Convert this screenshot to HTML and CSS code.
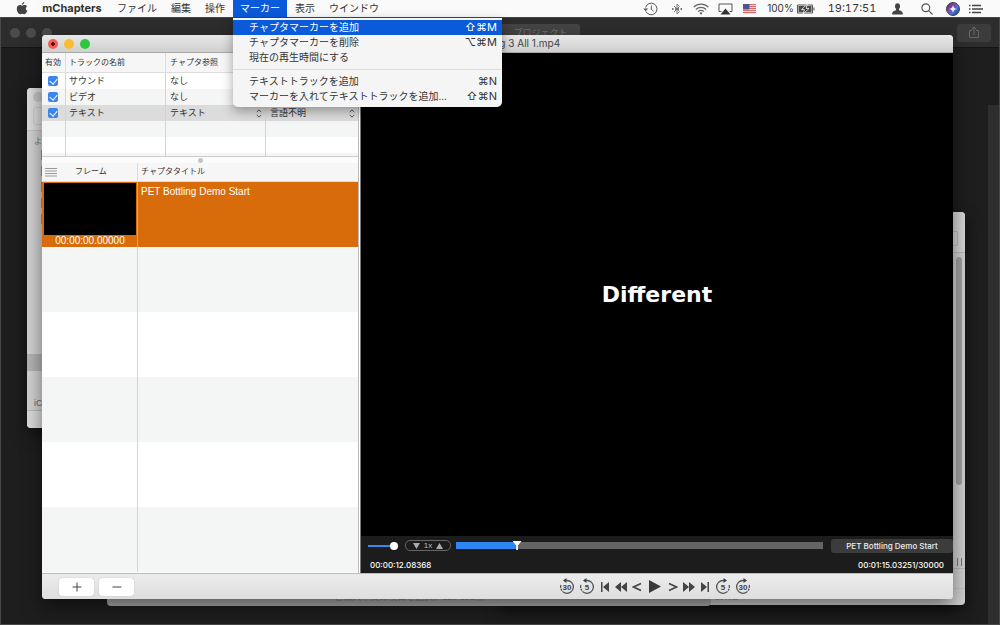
FILE: index.html
```html
<!DOCTYPE html>
<html lang="ja">
<head>
<meta charset="utf-8">
<title>mChapters</title>
<link rel="stylesheet" href="styles.css">
</head>
<body>
<div class="desktop">
  <header class="menubar">
    <nav class="menus" aria-label="メニュー">
      <button class="menu menu-apple" aria-label="Apple">
        <svg width="12" height="13" viewBox="0 0 12 13"><path fill="#444" d="M8.3 0c.1 1.300-1 2.700-2.300 2.700C5.800 1.500 7 .2 8.300 0zM10.900 4.400C9.300 5.400 9.500 7.900 11.300 8.700 10.700 10.500 9.500 12.300 8.300 12.300c-.8 0-1.100-.5-2-.5s-1.300.5-2 .5C2.500 12.300.8 9.300.8 6.800c0-2.400 1.500-3.700 3-3.700 1 0 1.700.6 2.400.6.600 0 1.400-.7 2.600-.7.9 0 1.700.5 2.100 1.400z"/></svg>
      </button>
      <button class="menu menu-app">mChapters</button>
      <button class="menu">ファイル</button>
      <button class="menu">編集</button>
      <button class="menu">操作</button>
      <div class="menu-wrap">
        <button class="menu menu-open" aria-expanded="true">マーカー</button>
        <div class="dropdown" role="menu">
          <button class="item item-active" role="menuitem"><span>チャプタマーカーを追加</span><kbd>⇧⌘M</kbd></button>
          <button class="item" role="menuitem"><span>チャプタマーカーを削除</span><kbd>⌥⌘M</kbd></button>
          <button class="item" role="menuitem"><span>現在の再生時間にする</span></button>
          <hr class="separator">
          <button class="item" role="menuitem"><span>テキストトラックを追加</span><kbd>⌘N</kbd></button>
          <button class="item" role="menuitem"><span>マーカーを入れてテキストトラックを追加...</span><kbd>⇧⌘N</kbd></button>
        </div>
      </div>
      <button class="menu">表示</button>
      <button class="menu">ウインドウ</button>
    </nav>
    <div class="status">
      <button class="stat stat-wide" aria-label="Time Machine"><svg width="16" height="14" viewBox="0 0 16 14" fill="none" stroke="#555"><path d="M3 9.500A5.800 5.800 0 1 0 2.600 5.500"/><path d="M8.300 3.500V7.300l2.300 1.900"/><path d="M.3 6.500h4.800L2.700 9.300z" fill="#555" stroke="none"/></svg></button>
      <button class="stat" aria-label="Bluetooth"><svg width="10" height="14" viewBox="0 0 10 14" fill="none" stroke="#777"><path d="M2 4l5.500 5.500L5 12V2l2.500 2.500L2 10"/><path d="M0 7h1.500M3 7h1M6 7h1M8.500 7H10" stroke-width="2"/></svg></button>
      <button class="stat" aria-label="Wi-Fi"><svg width="16" height="12" viewBox="0 0 16 12" fill="none" stroke="#666" stroke-width="1.200"><path d="M.7 4.200a10.300 10.300 0 0 1 14.600 0M2.900 6.500a7.200 7.200 0 0 1 10.200 0M5.100 8.600a4.100 4.100 0 0 1 5.800 0"/><path d="M6.500 10a2.100 2.100 0 0 1 3 0L8 11.700z" fill="#555" stroke="none"/></svg></button>
      <button class="stat" aria-label="AirPlay"><svg width="15" height="12" viewBox="0 0 15 12"><path d="M3.500 8.500H1V1h13v7.500h-2.500" fill="none" stroke="#555"/><path d="M7.500 5.500l5 6h-10z" fill="#333"/></svg></button>
      <button class="stat" aria-label="U.S."><svg width="13" height="10" viewBox="0 0 13 10"><path fill="#eedddd" d="M0 0h13v10H0z"/><path stroke="#d46a6a" d="M0 .5h13M0 2.500h13M0 4.500h13M0 6.500h13M0 8.500h13"/><path fill="#4c5590" d="M0 0h6.500v5.500H0z"/></svg></button>
      <button class="stat stat-battery"><span>100%</span><svg width="18" height="10" viewBox="0 0 18 10"><path d="M.5 1h15v8H.5zM17 3.500v3" fill="none" stroke="#555"/><path fill="#4a4a4a" d="M1.500 2h13v6h-13z"/><path d="M10.500 0L4.500 5.600h3L6 10l6-5.600H9z" fill="#333" stroke="#fafafa" stroke-width=".8"/></svg></button>
      <time class="stat stat-clock">19:17:51</time>
      <button class="stat stat-wide" aria-label="ユーザ"><svg width="11" height="12" viewBox="0 0 11 12" fill="#444"><ellipse cx="5.500" cy="3.300" rx="2.500" ry="3"/><path d="M4 5.500h3v1.700c2.500.5 3.900 1.500 3.900 4.300H.1C.1 8.700 1.500 7.700 4 7.200z"/></svg></button>
      <button class="stat stat-wide" aria-label="検索"><svg width="12" height="12" viewBox="0 0 12 12" fill="none" stroke="#555" stroke-width="1.200"><circle cx="4.800" cy="4.800" r="3.900"/><path d="M7.700 7.700l3.800 3.800"/></svg></button>
      <button class="stat stat-small" aria-label="Siri"><svg width="14" height="14" viewBox="0 0 14 14"><defs><linearGradient id="siri" x1="0" y1="0" x2="1" y2="1"><stop offset="0" stop-color="#3c3350"/><stop offset=".35" stop-color="#903c9a"/><stop offset=".6" stop-color="#4676dc"/><stop offset="1" stop-color="#24304e"/></linearGradient></defs><circle cx="7" cy="7" r="6.500" fill="url(#siri)" stroke="#445"/><path d="M7 3c.4 2.500 1.200 3.200 4 4C8.200 7.800 7.400 8.500 7 11 6.600 8.500 5.800 7.800 3 7 5.800 6.200 6.600 5.500 7 3z" fill="#e6f2ff"/></svg></button>
      <button class="stat stat-small" aria-label="通知センター"><svg width="14" height="10" viewBox="0 0 14 10"><path d="M0 1.500h1.500M3 1.500h9M0 5h1.500M3 5h11M0 8.500h1.500M3 8.500h9" stroke="#444" stroke-width="1.300"/></svg></button>
    </div>
  </header>

  <main class="stage">
    <section class="editor">
      <div class="editor-bar">
        <div class="dots"><i></i><i></i><i></i></div>
        <span class="editor-tab">プロジェクト</span>
        <button class="share" aria-label="共有"><svg width="12" height="13" viewBox="0 0 12 13" fill="none" stroke="#666"><path d="M4 4.500H1.500v7h9v-7H8M6 9V1.200M3.800 3.300L6 1l2.200 2.300"/></svg></button>
      </div>
      <div class="editor-body"><div class="editor-gutter"></div></div>
    </section>

    <section class="finder">
      <div class="finder-top"><i class="finder-dot"></i><i class="finder-back"></i></div>
      <p class="finder-label">よく使う項目</p>
      <div class="finder-rows"><i></i><i></i><i></i><i></i><i></i></div>
      <div class="finder-selected"></div>
      <p class="finder-cloud">iCloud</p>
      <div class="finder-foot"></div>
    </section>

    <section class="browser">
      <div class="browser-top"><i></i></div>
      <div class="browser-mid"><i class="scroll"></i><i class="grip"></i></div>
      <div class="browser-line"></div>
      <p class="browser-foot">説明書</p>
    </section>

    <section class="sheet"><p>ご購入本文の項目を選択、120 192点</p></section>

    <section class="window">
      <header class="titlebar">
        <div class="lights">
          <button class="light light-close" aria-label="閉じる"></button>
          <button class="light light-min" aria-label="しまう"></button>
          <button class="light light-zoom" aria-label="拡大"></button>
        </div>
        <h1 class="title">01 PET Bottling 3 All 1.mp4</h1>
      </header>

      <div class="content">
        <div class="lists">
          <table class="tracks">
            <colgroup><col class="col-on"><col class="col-name"><col class="col-name"><col></colgroup>
            <thead><tr><th>有効</th><th>トラックの名前</th><th>チャプタ参照</th><th aria-label="言語"></th></tr></thead>
            <tbody>
              <tr><td><input type="checkbox" class="tick" checked aria-label="サウンド"></td><td>サウンド</td><td>なし</td><td></td></tr>
              <tr><td><input type="checkbox" class="tick" checked aria-label="ビデオ"></td><td>ビデオ</td><td>なし</td><td></td></tr>
              <tr class="chosen"><td><input type="checkbox" class="tick" checked aria-label="テキスト"></td><td>テキスト</td>
                <td><div class="pick"><select aria-label="チャプタ参照"><option>テキスト</option></select><svg width="6" height="9" viewBox="0 0 6 9" fill="none" stroke="#555"><path d="M.8 3L3 .9 5.200 3M.8 6L3 8.100 5.200 6"/></svg></div></td>
                <td><div class="pick"><select aria-label="言語"><option>言語不明</option></select><svg width="6" height="9" viewBox="0 0 6 9" fill="none" stroke="#555"><path d="M.8 3L3 .9 5.200 3M.8 6L3 8.100 5.200 6"/></svg></div></td></tr>
              <tr><td></td><td></td><td></td><td></td></tr>
              <tr><td></td><td></td><td></td><td></td></tr>
              <tr class="stub"><td></td><td></td><td></td><td></td></tr>
            </tbody>
          </table>
          <div class="splitter"><i></i></div>
          <div class="chapters-box">
            <table class="chapters">
              <colgroup><col class="col-frame"><col></colgroup>
              <thead><tr><th><div class="frame-head"><svg width="12" height="9" viewBox="0 0 12 9"><path d="M0 .5h12M0 3h12M0 5.500h12M0 8h12" stroke="#999"/></svg><span>フレーム</span></div></th><th>チャプタタイトル</th></tr></thead>
              <tbody>
                <tr class="current"><td><div class="thumb"></div><div class="stamp">00:00:00.00000</div></td><td>PET Bottling Demo Start</td></tr>
                <tr><td></td><td></td></tr>
                <tr><td></td><td></td></tr>
                <tr><td></td><td></td></tr>
                <tr><td></td><td></td></tr>
                <tr><td></td><td></td></tr>
              </tbody>
            </table>
          </div>
        </div>

        <div class="player">
          <div class="video"><p>Different</p></div>
          <div class="controls">
            <div class="control-row">
              <input type="range" class="volume" min="0" max="100" value="100" aria-label="音量">
              <div class="rate"><button aria-label="遅く"><svg width="7" height="6" viewBox="0 0 7 6"><path fill="#aaa" d="M0 0h7L3.500 6z"/></svg></button><span>1x</span><button aria-label="速く"><svg width="7" height="6" viewBox="0 0 7 6"><path fill="#aaa" d="M0 6h7L3.500 0z"/></svg></button></div>
              <input type="range" class="seek" min="0" max="1000" value="158" aria-label="再生位置">
              <button class="chapter-now">PET Bottling Demo Start</button>
            </div>
            <div class="time-row"><time>00:00:12.08368</time><time>00:01:15.03251/30000</time></div>
          </div>
        </div>
      </div>

      <footer class="footer">
        <div class="edit">
          <button aria-label="追加"><svg width="10" height="10" viewBox="0 0 10 10" stroke="#444"><path d="M.5 5h9M5 .5v9"/></svg></button>
          <button aria-label="削除"><svg width="10" height="10" viewBox="0 0 10 10" stroke="#444"><path d="M.5 5h9"/></svg></button>
        </div>
        <div class="transport">
          <button class="big" aria-label="30秒戻る"><svg width="16" height="17" viewBox="0 0 16 17"><path d="M5 2.500h3A6.400 6.400 0 1 1 1.900 7" fill="none" stroke="#555" stroke-width="1.300" stroke-dasharray="28 1 2 1 30"/><path d="M4 2.500L7.500 0v5z" fill="#444"/><text x="8" y="12" class="num">30</text></svg></button>
          <button class="big" aria-label="5秒戻る"><svg width="16" height="17" viewBox="0 0 16 17"><path d="M5 2.500h3A6.400 6.400 0 1 1 1.900 7" fill="none" stroke="#555" stroke-width="1.300" stroke-dasharray="28 1 2 1 30"/><path d="M4 2.500L7.500 0v5z" fill="#444"/><text x="8" y="12" class="num">5</text></svg></button>
          <button aria-label="先頭へ"><svg width="8" height="10" viewBox="0 0 8 10" fill="#444"><path d="M0 0h1.500v10H0zM8 0v10L2 5z"/></svg></button>
          <button aria-label="巻き戻し"><svg width="12" height="10" viewBox="0 0 12 10" fill="#444"><path d="M6 0v10L0 5zM12 0v10L6 5z"/></svg></button>
          <button aria-label="前のコマ"><svg width="10" height="10" viewBox="0 0 10 10" fill="none" stroke="#444" stroke-width="1.600"><path d="M9 1.500L1.500 5 9 8.500"/></svg></button>
          <button class="big" aria-label="再生"><svg width="12" height="13" viewBox="0 0 12 13" fill="#3a3a3a"><path d="M0 0l12 6.500L0 13z"/></svg></button>
          <button aria-label="次のコマ"><svg width="10" height="10" viewBox="0 0 10 10" fill="none" stroke="#444" stroke-width="1.600"><path d="M1 1.500L8.500 5 1 8.500"/></svg></button>
          <button aria-label="早送り"><svg width="12" height="10" viewBox="0 0 12 10" fill="#444"><path d="M0 0v10l6-5zM6 0v10l6-5z"/></svg></button>
          <button aria-label="末尾へ"><svg width="8" height="10" viewBox="0 0 8 10" fill="#444"><path d="M6.500 0H8v10H6.500zM0 0v10l6-5z"/></svg></button>
          <button class="big" aria-label="5秒進む"><svg width="16" height="17" viewBox="0 0 16 17"><path d="M11 2.500H8A6.400 6.400 0 1 0 14.100 7" fill="none" stroke="#555" stroke-width="1.300" stroke-dasharray="28 1 2 1 30"/><path d="M12 2.500L8.500 0v5z" fill="#444"/><text x="8" y="12" class="num">5</text></svg></button>
          <button class="big" aria-label="30秒進む"><svg width="16" height="17" viewBox="0 0 16 17"><path d="M11 2.500H8A6.400 6.400 0 1 0 14.100 7" fill="none" stroke="#555" stroke-width="1.300" stroke-dasharray="28 1 2 1 30"/><path d="M12 2.500L8.500 0v5z" fill="#444"/><text x="8" y="12" class="num">30</text></svg></button>
        </div>
      </footer>
    </section>
  </main>
</div>
</body>
</html>
```
FILE: styles.css
```css
* { box-sizing: border-box; }
body {
  margin: 0;
  background: #1e1e1e;
  color: #333;
  font: 10px/15px "Liberation Sans", "Noto Sans CJK JP", sans-serif;
}
button, select, input { font: inherit; color: inherit; margin: 0; }
button { border: 0; padding: 0; background: none; }
p, h1, hr { margin: 0; }
i { display: block; }
svg { display: block; flex: none; }

.desktop { display: flex; flex-direction: column; height: 100vh; overflow: hidden; }

/* Menu bar */
.menubar {
  display: flex;
  justify-content: space-between;
  height: 17px;
  padding: 0 13px 0 9px;
  background: #fafafa;
  position: relative;
  z-index: 10;
}
.menus, .status { display: flex; align-items: stretch; }
.menu { height: 17px; padding: 0 7px; white-space: nowrap; }
.menu-apple { width: 26px; }
.menu-app { width: 74px; margin-right: 1px; font: bold 11px/17px "Inter", sans-serif; }
.menu-wrap { position: relative; margin: 0 1px; }
.menu-open { background: #0a5ad9; color: #fff; }
.dropdown {
  position: absolute;
  top: 18px;
  left: 0;
  width: 269px;
  padding: 2px 0 3px;
  background: #f5f5f5;
  border-radius: 0 0 5px 5px;
  box-shadow: 0 4px 12px rgba(0, 0, 0, .35);
}
.item {
  display: flex;
  justify-content: space-between;
  width: 100%;
  height: 15px;
  padding: 0 5px 0 16px;
  line-height: 15px;
}
.item-active { background: #0a5ad9; color: #fff; }
.item kbd { font: 11px/15px "Inter", "DejaVu Sans", sans-serif; }
.separator { height: 9px; border: 0; background: linear-gradient(#ddd, #ddd) center / 100% 1px no-repeat; }
.stat {
  display: flex;
  align-items: center;
  justify-content: center;
  width: 24px;
  font: 10px/17px "Inter", sans-serif;
}
.stat-small { width: 23px; }
.stat-wide { width: 29px; }
.stat-battery { width: 60px; gap: 3px; }
.stat-clock { width: 62px; font-size: 11px; font-variant-numeric: tabular-nums; }

/* Background windows */
.stage { flex: 1; position: relative; }
.editor {
  position: absolute;
  inset: 0;
  display: flex;
  flex-direction: column;
  border: 1px solid #484848;
  border-top-color: #3a4654;
}
.editor-bar {
  display: flex;
  align-items: center;
  justify-content: space-between;
  height: 30px;
  padding: 0 8px 0 9px;
  background: #2d2d2d;
  border-bottom: 1px solid #151515;
}
.dots { display: flex; gap: 6px; }
.dots i { width: 10px; height: 10px; border-radius: 50%; background: #4b4b4b; }
.editor-tab {
  width: 150px;
  height: 18px;
  padding-right: 12px;
  background: #444;
  border-radius: 3px;
  color: #707070;
  font-size: 9px;
  text-align: right;
  line-height: 18px;
}
.share { display: grid; place-items: center; width: 34px; height: 18px; background: #3c3c3c; border-radius: 3px; }
.editor-body { flex: 1; display: flex; justify-content: flex-end; background: #1e1e1e; }
.editor-gutter { width: 11px; margin-top: 57px; background: #2e2e2e; }

.finder {
  position: absolute;
  left: 27px;
  top: 71px;
  width: 300px;
  height: 340px;
  background: #d4d4d4;
  border-radius: 4px;
  box-shadow: 0 6px 16px rgba(0, 0, 0, .5);
  overflow: hidden;
}
.finder-top { height: 43px; padding: 4px 0 0 6px; background: #dedede; border-bottom: 1px solid #c4c4c4; }
.finder-dot { width: 10px; height: 10px; border-radius: 50%; background: #c6c6c6; }
.finder-back { width: 60px; height: 18px; margin-top: 5px; border: 1px solid #ccc; border-radius: 3px; }
.finder-label { padding: 2px 0 0 7px; font-size: 8px; line-height: 17px; color: #777; }
.finder-rows { display: grid; gap: 6px; padding: 0 0 0 14px; }
.finder-rows i { width: 9px; height: 10px; background: #999; }
.finder-selected { height: 17px; margin-top: 130px; background: #b5b5b5; }
.finder-cloud { padding: 25px 0 0 7px; font-size: 9px; line-height: 14px; color: #666; }
.finder-foot { height: 18px; border-top: 1px solid #bbb; background: #dcdcdc; }

.browser {
  position: absolute;
  left: 500px;
  right: 35px;
  top: 195px;
  bottom: 20px;
  display: flex;
  flex-direction: column;
  background: #d2d2d2;
  border-radius: 4px;
  box-shadow: 0 6px 16px rgba(0, 0, 0, .5);
}
.browser-top { display: flex; justify-content: flex-end; height: 41px; padding: 19px 7px 6px; border-bottom: 1px solid #bbb; border-radius: 4px 4px 0 0; background: #d8d8d8; }
.browser-top i { width: 60px; border: 1px solid #bbb; }
.browser-mid { flex: 1; display: flex; flex-direction: column; justify-content: space-between; align-items: flex-end; padding: 4px 3px 2px; border-bottom: 1px solid #bbb; }
.scroll { width: 6px; height: 228px; border-radius: 3px; background: #a2a2a2; }
.grip { width: 5px; height: 8px; border: solid #777; border-width: 0 1px; }
.browser-line { height: 20px; border-bottom: 1px solid #c4c4c4; }
.browser-foot { padding-left: 215px; color: #888; font-size: 8px; line-height: 16px; }

.sheet {
  position: absolute;
  left: 107px;
  right: 289px;
  top: 400px;
  bottom: 19px;
  display: flex;
  align-items: flex-end;
  justify-content: center;
  background: #b0b0b0;
  border-radius: 4px;
}
.sheet p { color: #888; font-size: 9px; line-height: 17px; }

/* Main window */
.window {
  position: absolute;
  left: 42px;
  right: 47px;
  top: 18px;
  bottom: 26px;
  display: flex;
  flex-direction: column;
  background: #fff;
  border-radius: 4px;
  box-shadow: 0 8px 20px rgba(0, 0, 0, .5);
  overflow: hidden;
}
.titlebar {
  display: grid;
  grid-template-columns: 1fr auto 1fr;
  align-items: center;
  height: 18px;
  padding: 0 6px;
  background: linear-gradient(#e8e8e8, #cfcfcf);
  border-bottom: 1px solid #aaa;
}
.title { font: 10px/17px "Inter", sans-serif; color: #444; }
.lights { display: flex; gap: 6px; }
.light { width: 10px; height: 10px; border-radius: 50%; }
.light-close { background: radial-gradient(circle, #6b0a05 0 2px, #f25e55 2px); }
.light-min { background: #fbbd2e; }
.light-zoom { background: #2ac840; }
.content { flex: 1; display: grid; grid-template-columns: 317px 1fr; min-height: 0; }
.lists { display: flex; flex-direction: column; min-height: 0; border-right: 1px solid #bbb; }

table { width: 100%; border-collapse: separate; border-spacing: 0; table-layout: fixed; }
th { font-size: 8px; font-weight: normal; text-align: left; background: #f6f6f6; border-bottom: 1px solid #ddd; border-right: 1px solid #ddd; padding: 0 3px; white-space: nowrap; }
td { border-right: 1px solid #d4d4d4; padding: 0 3px; }
th:last-child, td:last-child { border-right: 0; }

.tracks th { height: 20px; line-height: 19px; }
.tracks td { height: 16px; font-size: 9px; line-height: 16px; }
.tracks tr:nth-child(even) td { background: #f4f5f5; }
.tracks tr.chosen td { background: #dcdcdc; }
.tracks tr.stub td { height: 3px; }
.tracks th:nth-child(3), .tracks td:nth-child(3) { padding-left: 4px; }
.tracks td:nth-child(4) { padding-left: 4px; }
.col-on { width: 24px; }
.col-name { width: 100px; }
.tick {
  appearance: none;
  display: block;
  width: 10px;
  height: 10px;
  margin-left: 3px;
  border-radius: 2px;
  background: #3b84f2;
}
.tick:checked::before {
  content: "";
  display: block;
  width: 4px;
  height: 6px;
  margin: 1px auto 0;
  border: solid #fff;
  border-width: 0 1px 1px 0;
  transform: rotate(40deg);
}
.pick { display: flex; align-items: center; height: 16px; }
.pick select { flex: 1; min-width: 0; height: 16px; appearance: none; border: 0; padding: 0; background: none; }
.splitter { display: grid; place-items: center; height: 7px; background: #fcfcfc; border-top: 1px solid #ccc; }
.splitter i { width: 5px; height: 5px; border-radius: 50%; background: #c4c4c4; }

.chapters-box { flex: 1; min-height: 0; overflow: hidden; }
.chapters th { height: 19px; line-height: 18px; }
.chapters td { height: 65px; vertical-align: top; }
.chapters tr:nth-child(even) td { background: #f4f5f5; }
.chapters tr.current td { background: #d86c0b; color: #fff; border-right-color: #e9a566; line-height: 20px; }
.chapters tr.current td:first-child { padding: 1px 1px 0 2px; }
.col-frame { width: 96px; }
.frame-head { display: flex; align-items: center; gap: 18px; }
.thumb { height: 52px; background: #000; }
.stamp { font-size: 10px; line-height: 11px; text-align: center; }

/* Player */
.player { display: flex; flex-direction: column; min-width: 0; margin-left: 1px; background: #000; border-left: 1px solid #777; }
.video { flex: 1; display: grid; place-items: center; }
.video p { color: #fff; font: bold 22px/30px "DejaVu Sans", sans-serif; }
.controls { padding: 2px 0 1px; background: #1c1c1c; }
.control-row { display: flex; align-items: center; height: 15px; padding-left: 7px; }
.volume, .seek { appearance: none; background: none; }
.volume { width: 30px; height: 8px; background: linear-gradient(#3488f0, #3488f0) center / 100% 2px no-repeat; }
.volume::-webkit-slider-thumb { appearance: none; width: 8px; height: 8px; border-radius: 50%; background: #fff; }
.rate {
  display: flex;
  align-items: center;
  justify-content: space-between;
  width: 46px;
  height: 11px;
  margin: 0 5px 0 7px;
  padding: 0 7px;
  border: 1px solid #666;
  border-radius: 5px;
  color: #bbb;
  font-size: 8px;
  line-height: 9px;
}
.seek { flex: 1; min-width: 0; height: 9px; background: linear-gradient(90deg, #2e86f5 17%, #646464 17%) center / 100% 7px no-repeat; }
.seek::-webkit-slider-thumb {
  appearance: none;
  width: 9px;
  height: 9px;
  background: #fff;
  clip-path: polygon(0 0, 100% 0, 60% 50%, 60% 100%, 40% 100%, 40% 50%);
}
.chapter-now { width: 122px; height: 14px; margin-left: 8px; border-radius: 3px; background: #3c3c3c; color: #eee; font: 500 8px/14px "Inter", sans-serif; }
.time-row { display: flex; justify-content: space-between; padding: 5px 9px 0; color: #fff; font: 500 8px/14px "Inter", sans-serif; }

/* Bottom bar */
.footer {
  display: grid;
  grid-template-columns: 317px 1fr;
  align-items: center;
  height: 26px;
  background: linear-gradient(#ececec, #dedede);
  border-top: 1px solid #bbb;
}
.edit { display: flex; gap: 5px; padding-left: 17px; }
.edit button { display: grid; place-items: center; width: 35px; height: 18px; background: #fff; border-radius: 3px; box-shadow: 0 0 1px #999; }
.transport { display: flex; justify-content: center; padding-right: 2px; }
.transport button { display: grid; place-items: center; width: 16px; height: 20px; }
.transport .big { width: 20px; }
.num { font: bold 8px "Liberation Sans", sans-serif; fill: #444; text-anchor: middle; }
```
